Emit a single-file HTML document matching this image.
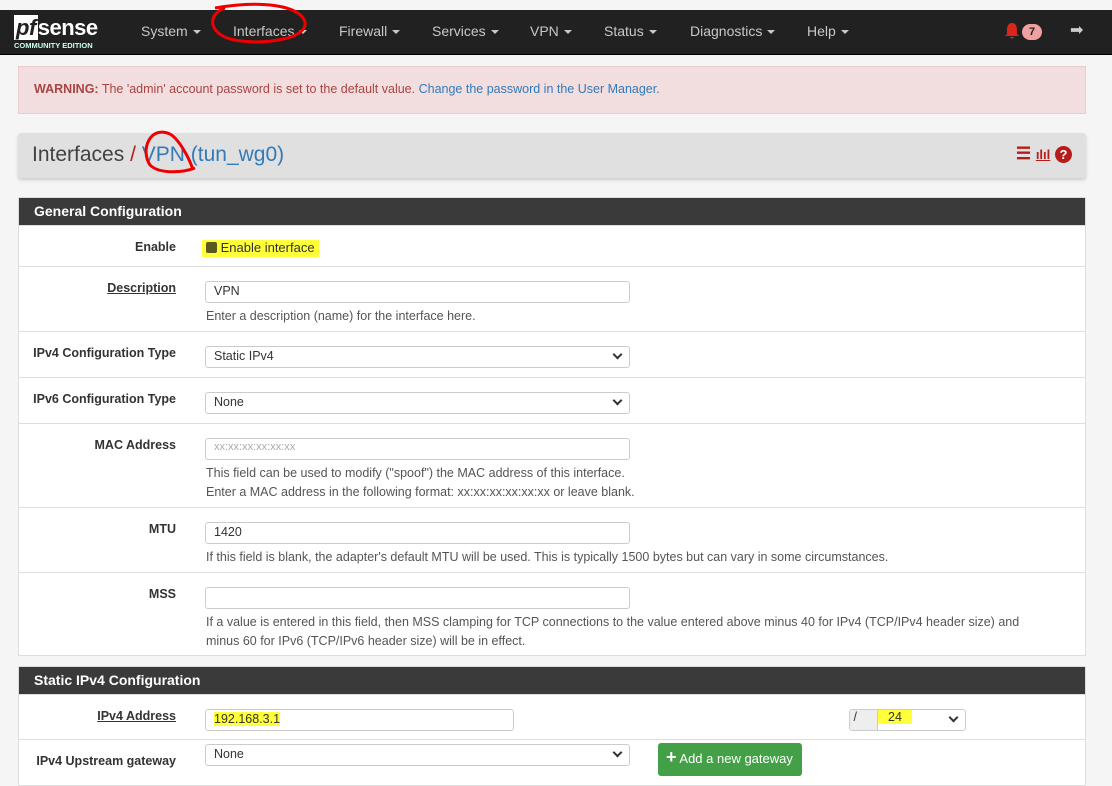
<!DOCTYPE html><html><head><style>
*{box-sizing:border-box;margin:0;padding:0}
body{width:1112px;height:777px;overflow:hidden;background:#f5f5f5;font-family:"Liberation Sans",sans-serif;font-size:13px;color:#333;position:relative}
.nav{position:absolute;top:10px;left:0;width:1112px;height:45px;background:#212121;border-bottom:1px solid #000}
.nav .it{position:absolute;top:13px;color:#c8c8c8;font-size:14px}
.car{display:inline-block;border-top:4px solid #c8c8c8;border-left:4px solid transparent;border-right:4px solid transparent;vertical-align:middle;margin-left:5px}
.warn{position:absolute;left:18px;top:66px;width:1068px;height:48px;background:#f2dede;border:1px solid #ebccd1;color:#a94442;padding:15px 15px;font-size:12.5px}
.warn a{color:#337ab7}
.hdr{position:absolute;left:18px;top:133px;width:1068px;height:45px;background:#e0e0e0;border-radius:3px;box-shadow:0 2px 3px #ccc;padding:10px 14px;font-size:21px;color:#424242}
.sec{position:absolute;left:18px;width:1068px;background:#fff;border:1px solid #ddd}
.sh{background:#3a3a3a;color:#fff;font-weight:bold;font-size:14px;height:27px;padding:5px 15px}
.row{position:relative;border-top:1px solid #ddd}
.lbl{position:absolute;right:909px;top:14px;font-weight:bold;font-size:12.5px;text-align:right;white-space:nowrap}
.lbl.u{text-decoration:underline}
.inp{position:absolute;left:186px;top:14px;width:425px;height:22px;border:1px solid #ccc;border-radius:3px;padding:2px 8px;font-size:12.5px;background:#fff}
.help{position:absolute;left:187px;font-size:12.5px;color:#555;line-height:19px}
.chev{position:absolute;right:8px;top:4px;width:7px;height:7px;border-right:2px solid #333;border-bottom:2px solid #333;transform:rotate(45deg)}
.hl{background:#ffff3a}
</style></head><body>
<div class="nav">
 <div style="position:absolute;left:14px;top:5px;color:#fff;font-weight:bold;font-size:22px;letter-spacing:-0.5px"><span style="background:#fff;color:#212121;padding:0 2px;font-style:italic">pf</span>sense</div>
 <div style="position:absolute;left:14px;top:31px;color:#cfe;font-size:7.5px;font-weight:bold">COMMUNITY EDITION</div>
 <span class="it" style="left:141px">System<i class="car"></i></span>
 <span class="it" style="left:233px">Interfaces<i class="car"></i></span>
 <span class="it" style="left:339px">Firewall<i class="car"></i></span>
 <span class="it" style="left:432px">Services<i class="car"></i></span>
 <span class="it" style="left:530px">VPN<i class="car"></i></span>
 <span class="it" style="left:604px">Status<i class="car"></i></span>
 <span class="it" style="left:690px">Diagnostics<i class="car"></i></span>
 <span class="it" style="left:807px">Help<i class="car"></i></span>
 <svg style="position:absolute;left:1004px;top:12px" width="16" height="18" viewBox="0 0 16 18"><path d="M8 1 C4 1 3 5 3 8 L3 12 L1 14 L15 14 L13 12 L13 8 C13 5 12 1 8 1Z M6 15 L10 15 C10 17 6 17 6 15Z" fill="#d9261c"/></svg>
 <span style="position:absolute;left:1022px;top:14px;background:#f0a0a0;color:#222;border-radius:8px;width:20px;height:16px;font-size:11px;font-weight:bold;text-align:center;line-height:16px">7</span>
 <span style="position:absolute;left:1070px;top:10px;color:#ccc;font-size:16px">➡</span>
</div>
<div class="warn"><b>WARNING:</b> The 'admin' account password is set to the default value. <a>Change the password in the User Manager.</a></div>
<div class="hdr">Interfaces <span style="color:#b71c1c">/</span> <span style="color:#337ab7">VPN (tun_wg0)</span>
 <span style="position:absolute;right:14px;top:11px;color:#b71c1c;font-size:17px;font-weight:bold">☰ <span style="font-size:13px;text-decoration:underline">ılıl</span> <span style="display:inline-block;width:17px;height:17px;border-radius:50%;background:#b71c1c;color:#fff;font-size:13px;text-align:center;line-height:17px">?</span></span>
</div>
<div class="sec" style="top:197px;height:459px">
 <div class="sh">General Configuration</div>
 <div class="row" style="height:41px"><div class="lbl" style="top:14px">Enable</div>
  <div style="position:absolute;left:183px;top:14px;padding:0 4px 2px 4px" class="hl"><span style="display:inline-block;width:11px;height:11px;background:#5a5a20;border-radius:2px;vertical-align:-1px"></span> Enable interface</div></div>
 <div class="row" style="height:65px"><div class="lbl u">Description</div><div class="inp">VPN</div><div class="help" style="top:40px">Enter a description (name) for the interface here.</div></div>
 <div class="row" style="height:46px"><div class="lbl">IPv4 Configuration Type</div><div class="inp">Static IPv4<i class="chev"></i></div></div>
 <div class="row" style="height:46px"><div class="lbl">IPv6 Configuration Type</div><div class="inp">None<i class="chev"></i></div></div>
 <div class="row" style="height:84px"><div class="lbl">MAC Address</div><div class="inp" style="color:#aaa;font-size:11px">xx:xx:xx:xx:xx:xx</div><div class="help" style="top:40px">This field can be used to modify ("spoof") the MAC address of this interface.<br>Enter a MAC address in the following format: xx:xx:xx:xx:xx:xx or leave blank.</div></div>
 <div class="row" style="height:65px"><div class="lbl">MTU</div><div class="inp">1420</div><div class="help" style="top:40px">If this field is blank, the adapter's default MTU will be used. This is typically 1500 bytes but can vary in some circumstances.</div></div>
 <div class="row" style="height:84px"><div class="lbl">MSS</div><div class="inp"></div><div class="help" style="top:40px">If a value is entered in this field, then MSS clamping for TCP connections to the value entered above minus 40 for IPv4 (TCP/IPv4 header size) and<br>minus 60 for IPv6 (TCP/IPv6 header size) will be in effect.</div></div>
</div>
<div class="sec" style="top:666px;height:120px">
 <div class="sh">Static IPv4 Configuration</div>
 <div class="row" style="height:45px"><div class="lbl u">IPv4 Address</div><div class="inp" style="width:309px"><span class="hl">192.168.3.1</span></div>
  <div class="inp" style="left:830px;width:117px;padding:0"><span style="display:inline-block;width:28px;height:20px;background:#eee;border-right:1px solid #ccc" class="hl">&nbsp;/</span><span class="hl" style="padding:0 10px">24</span><i class="chev"></i></div></div>
 <div class="row" style="height:45px"><div class="lbl">IPv4 Upstream gateway</div><div class="inp" style="top:4px">None<i class="chev"></i></div>
  <div style="position:absolute;left:639px;top:3px;width:144px;height:33px;background:#43a047;border-radius:3px;color:#fff;padding:8px 8px;font-size:13px"><b style="font-size:18px;line-height:10px">+</b> Add a new gateway</div></div>
</div>
<svg style="position:absolute;left:0;top:0" width="1112" height="777"><g fill="none" stroke="#e00" stroke-width="3">
<path d="M215 8 C260 0 300 5 305 22 C308 40 260 45 235 40 C210 36 205 15 225 8"/>
<path d="M170 134 C150 125 140 150 150 165 C160 175 185 172 195 168 M170 134 C180 140 190 160 193 170"/></g></svg>
</body></html>
